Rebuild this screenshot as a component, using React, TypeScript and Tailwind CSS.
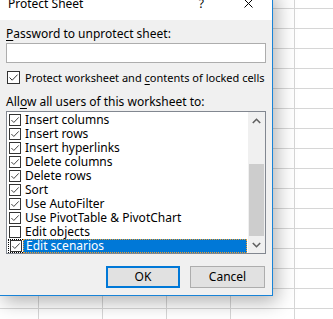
import React from 'react';
import clsx from 'clsx';

const items: { label: string; checked: boolean }[] = [
  { label: 'Insert columns', checked: true },
  { label: 'Insert rows', checked: true },
  { label: 'Insert hyperlinks', checked: true },
  { label: 'Delete columns', checked: true },
  { label: 'Delete rows', checked: true },
  { label: 'Sort', checked: true },
  { label: 'Use AutoFilter', checked: true },
  { label: 'Use PivotTable & PivotChart', checked: true },
  { label: 'Edit objects', checked: false },
  { label: 'Edit scenarios', checked: true },
];

const Check = ({ checked, size = 13 }: { checked: boolean; size?: number }) => (
  <span
    className={clsx(
      'flex shrink-0 items-center justify-center border border-[#333] bg-white',
      size === 13 ? 'h-[13px] w-[13px]' : 'h-[12px] w-[12px]'
    )}
  >
    {checked && (
      <svg width={size - 2} height={size - 2} viewBox="0 0 11 11" className="block">
        <path d="M1.5 5.5 L4.2 8.2 L9.6 2.6" fill="none" stroke="#333" strokeWidth="1" />
      </svg>
    )}
  </span>
);

export default function App() {
  return (
    <div
      className="relative h-[319px] w-[333px] overflow-hidden bg-white bg-[linear-gradient(to_right,#d6d6d6_1px,transparent_1px),linear-gradient(to_bottom,#d6d6d6_1px,transparent_1px)] bg-size-[64px_20px] bg-position-[38px_8px] text-[12px] text-black"
      style={{ fontFamily: '"Segoe UI", "Noto Sans", sans-serif' }}
    >
      {/* dialog window */}
      <div className="absolute left-[-1px] top-[-11px] w-[274px] border border-[#1883d7] bg-[#f0f0f0] shadow-[4px_6px_18px_rgba(0,0,0,0.3)]">
        <div className="flex h-[30px] items-start bg-white pt-[6px] pl-[8px] leading-[16px]">
          <span className="text-[12px]">Protect Sheet</span>
          <span className="ml-auto mr-[40px] text-[12px]">?</span>
          <svg width="9" height="9" viewBox="0 0 9 9" className="mr-[19px] mt-[3px]">
            <path d="M0.5 0.5 L8.5 8.5 M8.5 0.5 L0.5 8.5" stroke="#000" strokeWidth="1" />
          </svg>
        </div>

        <div className="flex flex-col px-[6px] pt-[7px] pb-[7px]">
          <div className="h-[14px] leading-[14px]">
            <span className="underline underline-offset-2">P</span>assword to unprotect sheet:
          </div>
          <div className="mt-[2px] h-[20px] w-[260px] border border-[#adadad] bg-white" />

          <div className="mt-[8px] flex h-[13px] items-center gap-[5px] pl-[1px] leading-[13px]">
            <Check checked />
            <span className="whitespace-nowrap text-[11px]">
              Protect worksheet and <span className="underline underline-offset-2">c</span>ontents of locked cells
            </span>
          </div>

          <div className="mt-[11px] h-[14px] leading-[14px]">
            All<span className="underline underline-offset-2">o</span>w all users of this worksheet to:
          </div>

          <div className="mt-[2px] flex h-[143px] w-[260px] border border-[#828790] bg-white">
            <div className="flex flex-1 flex-col pt-[1px]">
              {items.map((it, i) => {
                const selected = i === items.length - 1;
                return selected ? (
                  <div key={it.label} className="flex h-[14px] pl-[1px]">
                    <div className="flex w-[15px] items-center border-y border-l border-dotted border-black pl-[1px]">
                      <Check checked={it.checked} size={12} />
                    </div>
                    <div className="flex w-[224px] items-center border border-dotted border-[#f0a030] bg-[#0078d7] pl-[2px] leading-[12px] text-white">
                      {it.label}
                    </div>
                  </div>
                ) : (
                  <div key={it.label} className="flex h-[14px] items-center pl-[2px] leading-[14px]">
                    <Check checked={it.checked} size={12} />
                    <span className="ml-[4px]">{it.label}</span>
                  </div>
                );
              })}
            </div>
            {/* scrollbar */}
            <div className="flex w-[17px] flex-col bg-[#f0f0f0]">
              <div className="flex h-[17px] items-center justify-center">
                <svg width="9" height="6" viewBox="0 0 9 6">
                  <path d="M0.8 5 L4.5 1.3 L8.2 5" fill="none" stroke="#606060" strokeWidth="1.6" />
                </svg>
              </div>
              <div className="h-[35px]" />
              <div className="mx-[1px] h-[72px] bg-[#cdcdcd]" />
              <div className="flex h-[17px] items-center justify-center">
                <svg width="9" height="6" viewBox="0 0 9 6">
                  <path d="M0.8 1 L4.5 4.7 L8.2 1" fill="none" stroke="#606060" strokeWidth="1.6" />
                </svg>
              </div>
            </div>
          </div>

          <div className="mt-[12px] flex justify-end gap-[10px] pr-[1px]">
            <button className="h-[22px] w-[74px] border-2 border-[#0078d7] bg-[#e1e1e1] leading-[18px]">OK</button>
            <button className="h-[22px] w-[75px] border border-[#adadad] bg-[#e1e1e1] leading-[20px]">Cancel</button>
          </div>
        </div>
      </div>
    </div>
  );
}
